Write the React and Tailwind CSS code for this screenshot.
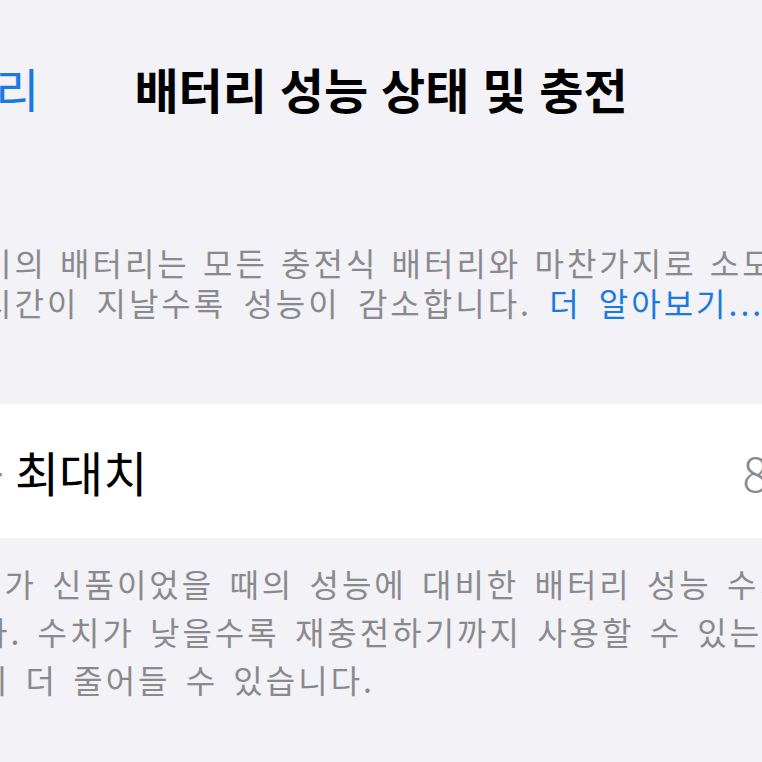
import React from 'react';

const App = () => {
    return (
        <div className="w-[762px] h-[762px] overflow-hidden bg-[#f2f2f7] font-['Noto_Sans_CJK_KR',sans-serif]">
            {/* Nav bar */}
            <div className="grid grid-cols-[1fr_auto_1fr] items-center h-[176px]">
                <div className="overflow-hidden">
                    <span className="block whitespace-nowrap text-[48px] leading-none text-[#1b7ae0] ml-[-93px]">배터리</span>
                </div>
                <h1 className="whitespace-nowrap text-[48px] leading-none font-bold [word-spacing:2px] text-black">
                    배터리 성능 상태 및 충전
                </h1>
                <div />
            </div>

            {/* Intro text */}
            <div className="mt-[66px] ml-[-18px] text-[32px] leading-[40px] tracking-[3px] text-[#8a8a8e] whitespace-nowrap">
                <div className="[word-spacing:3px]">기의 배터리는 모든 충전식 배터리와 마찬가지로 소모품으로</div>
                <div className="[word-spacing:7px]">
                    시간이 지날수록 성능이 감소합니다. <span className="text-[#1b7ae0]">더 알아보기...</span>
                </div>
            </div>

            {/* Card */}
            <div className="mt-[82px] h-[134px] bg-white flex items-center justify-between whitespace-nowrap">
                <span className="ml-[-40px] text-[48px] text-black">
                    <span className="text-[#8a8a8e]">능</span> 최대치
                </span>
                <span className="mr-[-75px] text-[48px] font-light text-[#8a8a8e]">87%</span>
            </div>

            {/* Footer text */}
            <div className="mt-[21px] ml-[-28px] text-[32px] leading-[48px] tracking-[3px] [word-spacing:5px] text-[#8a8a8e] whitespace-nowrap">
                <div>리가 신품이었을 때의 성능에 대비한 배터리 성능 수치입니다.</div>
                <div className="ml-[6px]">다. 수치가 낮을수록 재충전하기까지 사용할 수 있는 시간이</div>
                <div className="ml-[6px]">이 더 줄어들 수 있습니다.</div>
            </div>
        </div>
    );
};

export default App;
